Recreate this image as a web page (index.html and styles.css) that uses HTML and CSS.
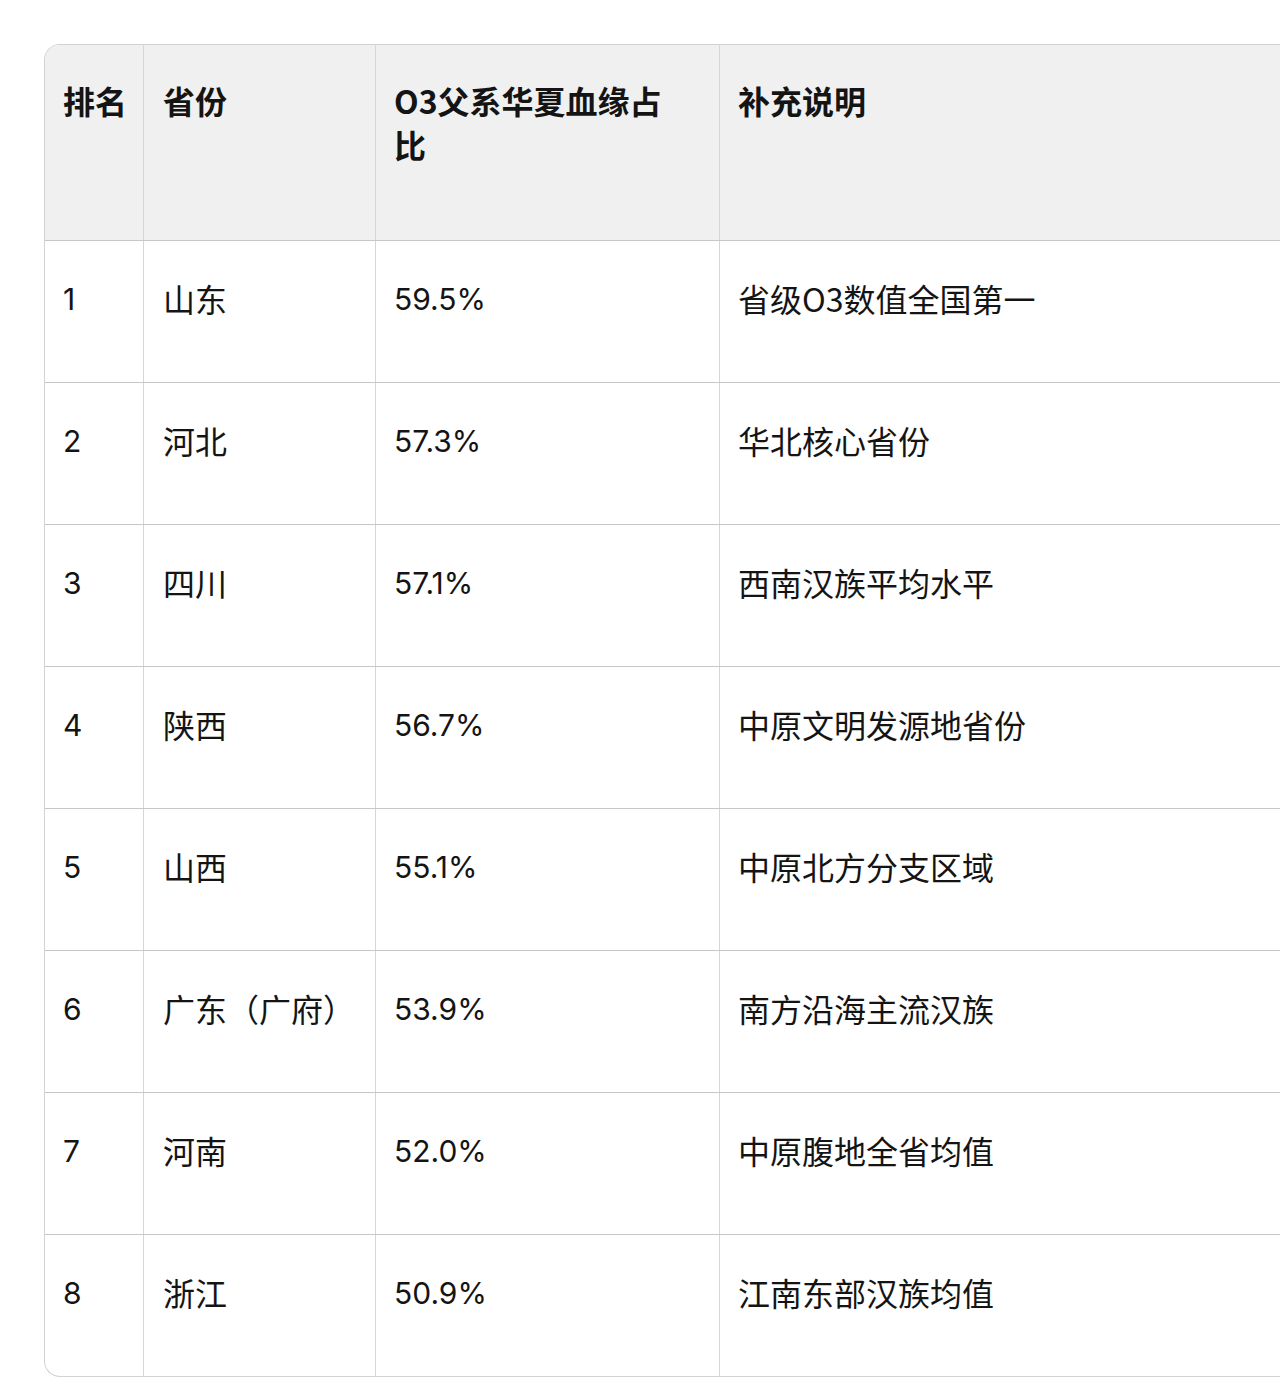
FILE: index.html
```html
<!DOCTYPE html>
<html lang="zh-CN">
<head>
<meta charset="utf-8">
<title>O3父系华夏血缘占比</title>
<link rel="stylesheet" href="styles.css">
</head>
<body>
<div class="page">
  <div class="table">
    <div class="row head">
      <div class="cell c1">排名</div>
      <div class="cell c2">省份</div>
      <div class="cell c3">O3父系华夏血缘占<br>比</div>
      <div class="cell c4">补充说明</div>
    </div>
    <div class="row"><div class="cell c1">1</div><div class="cell c2">山东</div><div class="cell c3">59.5%</div><div class="cell c4">省级O3数值全国第一</div></div>
    <div class="row"><div class="cell c1">2</div><div class="cell c2">河北</div><div class="cell c3">57.3%</div><div class="cell c4">华北核心省份</div></div>
    <div class="row"><div class="cell c1">3</div><div class="cell c2">四川</div><div class="cell c3">57.1%</div><div class="cell c4">西南汉族平均水平</div></div>
    <div class="row"><div class="cell c1">4</div><div class="cell c2">陕西</div><div class="cell c3">56.7%</div><div class="cell c4">中原文明发源地省份</div></div>
    <div class="row"><div class="cell c1">5</div><div class="cell c2">山西</div><div class="cell c3">55.1%</div><div class="cell c4">中原北方分支区域</div></div>
    <div class="row"><div class="cell c1">6</div><div class="cell c2">广东（广府）</div><div class="cell c3">53.9%</div><div class="cell c4">南方沿海主流汉族</div></div>
    <div class="row"><div class="cell c1">7</div><div class="cell c2">河南</div><div class="cell c3">52.0%</div><div class="cell c4">中原腹地全省均值</div></div>
    <div class="row last"><div class="cell c1">8</div><div class="cell c2">浙江</div><div class="cell c3">50.9%</div><div class="cell c4">江南东部汉族均值</div></div>
  </div>
</div>
</body>
</html>
```
FILE: styles.css
```css
html, body {
  margin: 0;
  padding: 0;
  background: #ffffff;
}
.page {
  padding: 44px 0 0 44px;
  width: 1280px;
  box-sizing: border-box;
  font-family: "Inter", "Noto Sans CJK SC", sans-serif;
  font-size: 30px;
  color: #141414;
}
.table {
  border: 1px solid #d2d2d2;
  border-right: none;
  border-radius: 16px 0 0 16px;
  overflow: hidden;
}
.row {
  display: grid;
  grid-template-columns: 99px 232px 344px 1fr;
  height: 142px;
  border-bottom: 1px solid #c6c6c6;
  box-sizing: border-box;
}
.row.last {
  border-bottom: none;
  height: 141px;
}
.row.head {
  height: 196px;
  background: #f0f0f0;
  font-weight: 700;
}
.cell {
  box-sizing: border-box;
  padding: 35px 18px 0 18px;
  line-height: 44px;
  border-right: 1px solid #d6d6d6;
  font-family: "Noto Sans CJK SC", sans-serif;
  font-size: 32px;
  white-space: nowrap;
}
.head .cell {
  padding-top: 33px;
}
.c1, .c3 {
  font-family: "Inter", "Noto Sans CJK SC", sans-serif;
  font-size: 30px;
  padding-top: 36px;
}
.c1 {
  padding-right: 0;
}
.head .c1, .head .c3 {
  font-family: "Noto Sans CJK SC", sans-serif;
  font-size: 32px;
  padding-top: 33px;
}
.c2 {
  padding-left: 19px;
}
.c4 {
  border-right: none;
}
```
